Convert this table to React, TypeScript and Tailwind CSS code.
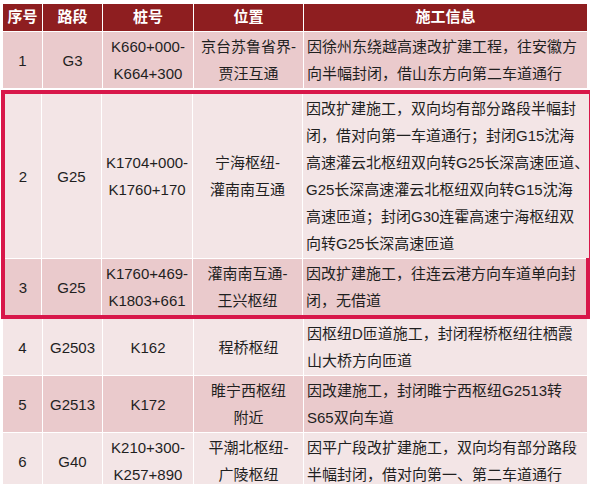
const font = { fontFamily: '"Liberation Sans", "Noto Sans CJK SC", sans-serif' };

type Row = {
  no: string;
  road: string;
  stake: string[];
  place: string[];
  info: string[];
};

const rows: Row[] = [
  {
    no: "1",
    road: "G3",
    stake: ["K660+000-", "K664+300"],
    place: ["京台苏鲁省界-", "贾汪互通"],
    info: ["因徐州东绕越高速改扩建工程，往安徽方", "向半幅封闭，借山东方向第二车道通行"],
  },
  {
    no: "2",
    road: "G25",
    stake: ["K1704+000-", "K1760+170"],
    place: ["宁海枢纽-", "灌南南互通"],
    info: [
      "因改扩建施工，双向均有部分路段半幅封",
      "闭，借对向第一车道通行；封闭G15沈海",
      "高速灌云北枢纽双向转G25长深高速匝道、",
      "G25长深高速灌云北枢纽双向转G15沈海",
      "高速匝道；封闭G30连霍高速宁海枢纽双",
      "向转G25长深高速匝道",
    ],
  },
  {
    no: "3",
    road: "G25",
    stake: ["K1760+469-", "K1803+661"],
    place: ["灌南南互通-", "王兴枢纽"],
    info: ["因改扩建施工，往连云港方向车道单向封", "闭，无借道"],
  },
  {
    no: "4",
    road: "G2503",
    stake: ["K162"],
    place: ["程桥枢纽"],
    info: ["因枢纽D匝道施工，封闭程桥枢纽往栖霞", "山大桥方向匝道"],
  },
  {
    no: "5",
    road: "G2513",
    stake: ["K172"],
    place: ["睢宁西枢纽", "附近"],
    info: ["因改建施工，封闭睢宁西枢纽G2513转", "S65双向车道"],
  },
  {
    no: "6",
    road: "G40",
    stake: ["K210+300-", "K257+890"],
    place: ["平潮北枢纽-", "广陵枢纽"],
    info: ["因平广段改扩建施工，双向均有部分路段", "半幅封闭，借对向第一、第二车道通行"],
  },
];

function Lines({ lines }: { lines: string[] }) {
  return (
    <>
      {lines.map((l) => (
        <div key={l} className="whitespace-nowrap">
          {l}
        </div>
      ))}
    </>
  );
}

function TableRow({ row, odd, inBox }: { row: Row; odd: boolean; inBox?: boolean }) {
  const bg = odd ? "bg-[#eacacc]" : "bg-[#f3e5e6]";
  const cell = `${bg} flex flex-col items-center justify-center text-center py-px`;
  return (
    <div
      className={`grid gap-px text-[15px] leading-[27px] text-[#1f1f1f] ${
        inBox
          ? "grid-cols-[36px_59px_90px_109px_1fr]"
          : "grid-cols-[39px_59px_90px_109px_1fr]"
      }`}
    >
      <div className={cell}>{row.no}</div>
      <div className={cell}>{row.road}</div>
      <div className={cell}>
        <Lines lines={row.stake} />
      </div>
      <div className={cell}>
        <Lines lines={row.place} />
      </div>
      <div className={`${bg} flex flex-col justify-center py-px pl-[3px]`}>
        <Lines lines={row.info} />
      </div>
    </div>
  );
}

export default function App() {
  return (
    <div className="h-[484px] w-[591px] overflow-hidden bg-white" style={font}>
      <div className="ml-[3px] mt-[4px] w-[584px] flex flex-col gap-px">
        <div className="grid grid-cols-[39px_59px_90px_109px_1fr] gap-px text-[15px] font-bold text-white">
          {["序号", "路段", "桩号", "位置", "施工信息"].map((h) => (
            <div key={h} className="flex h-[27px] items-center justify-center bg-[#8e1e20]">
              {h}
            </div>
          ))}
        </div>
        <TableRow row={rows[0]} odd />
        <div className="-ml-[2px] -mr-[3px] mt-px -mb-px flex flex-col gap-px border-4 border-[#d8174a] bg-white">
          <TableRow row={rows[1]} odd={false} inBox />
          <TableRow row={rows[2]} odd inBox />
        </div>
        <TableRow row={rows[3]} odd={false} />
        <TableRow row={rows[4]} odd />
        <TableRow row={rows[5]} odd={false} />
      </div>
    </div>
  );
}
